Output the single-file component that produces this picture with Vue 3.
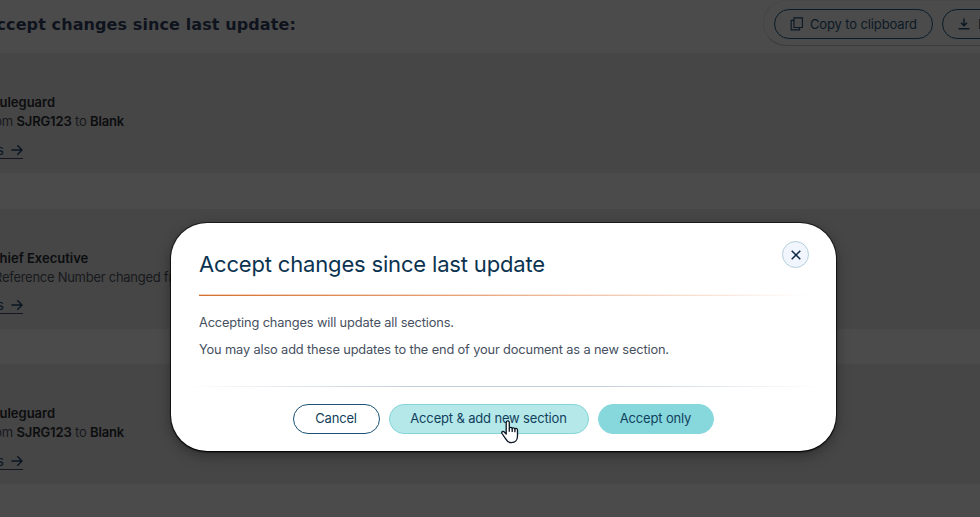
<template>
  <div class="screen">
    <div class="page">
      <header class="page-header">
        <h1>Accept changes since last update:</h1>
        <div class="toolbar">
          <button class="tool-btn">
            <svg class="copy-icon" viewBox="0 0 14 14" fill="none" stroke="currentColor" stroke-width="1.1">
              <path d="M4 .9h8.4v9.6H4zM4 3.4H1.2v9.5h8.4v-2.4"/>
            </svg>
            <span>Copy to clipboard</span>
          </button>
          <button class="tool-btn download">
            <svg class="download-icon" viewBox="0 0 12 12" fill="none" stroke="currentColor" stroke-width="1.5">
              <path d="M6 .5v7M3 4.8l3 3 3-3M.5 10.8h11"/>
            </svg>
            <span>Download</span>
          </button>
        </div>
      </header>

      <section v-for="(item, i) in changes" :key="i" class="change">
        <p class="line" :class="item.kind"><b>{{ item.owner }}</b></p>
        <p v-if="item.kind === 'entity'" class="line detail from">from <b>SJRG123</b> to <b>Blank</b></p>
        <p v-else class="line detail reference">Reference Number changed from</p>
        <a class="link">
          <span>s</span>
          <svg viewBox="0 0 12 12" fill="none" stroke="currentColor" stroke-width="1.5">
            <path d="M.5 6h10.3M6.3 1.3L11 6l-4.7 4.7"/>
          </svg>
        </a>
      </section>
    </div>

    <div class="overlay">
      <div class="modal">
        <div class="modal-header">
          <h2>Accept changes since last update</h2>
          <button class="close-btn">
            <svg viewBox="0 0 10 10" fill="none" stroke="currentColor" stroke-width="1.5">
              <path d="M.7.7l8.6 8.6M9.3.7L.7 9.3"/>
            </svg>
          </button>
        </div>
        <div class="title-rule"></div>
        <div class="modal-body">
          <p>Accepting changes will update all sections.</p>
          <p>You may also add these updates to the end of your document as a new section.</p>
        </div>
        <div class="footer-rule"></div>
        <div class="modal-actions">
          <button class="btn cancel">Cancel</button>
          <button class="btn add">
            Accept &amp; add new section
            <svg class="pointer" viewBox="0 0 18 24" fill="#fff" stroke="#0b1524" stroke-width="1.3" stroke-linejoin="round">
              <path d="M5.2 14V2.6C5.2.4 8.3.4 8.3 2.6v6c0-1.7 2.9-1.6 2.9.3 0-1.6 2.7-1.4 2.7.5 0-1.5 2.6-1.3 2.6.7v6c0 4-2.4 6.6-6 6.6-3 0-4.5-1.3-5.8-3.8L1 13.5c-.9-1.7 1-2.8 2.3-1.5z"/>
              <path d="M8.3 8.6v3.2M11.2 9v3M13.9 9.6v2.7" fill="none"/>
            </svg>
          </button>
          <button class="btn only">Accept only</button>
        </div>
      </div>
    </div>
  </div>
</template>

<script setup>
const changes = [
  { kind: 'entity', owner: 'Ruleguard' },
  { kind: 'role', owner: 'Chief Executive' },
  { kind: 'entity', owner: 'Ruleguard' }
];
</script>

<style>
body {
  margin: 0;
  overflow: hidden;
}
</style>

<style scoped>
.screen {
  display: grid;
  width: 980px;
  height: 517px;
  overflow: hidden;
  background: #4b4b4b;
  font-family: Inter, sans-serif;
}

.page,
.overlay {
  grid-area: 1 / 1;
  min-width: 0;
  min-height: 0;
}

.page {
  overflow: hidden;
}

.page-header {
  display: flex;
  justify-content: space-between;
  height: 53px;
}

h1 {
  margin: 14px 0 0 -16px;
  font: bold 16px/21px "DejaVu Sans", sans-serif;
  letter-spacing: 0.1px;
  color: #0e131d;
  white-space: nowrap;
}

.toolbar {
  box-sizing: border-box;
  display: flex;
  gap: 9px;
  width: 217px;
  height: 46px;
  padding: 8px 0 0 10px;
  border: 1px solid #454545;
  border-top-color: #484848;
  border-bottom-color: #3c3c3e;
  border-right: none;
  border-radius: 23px 0 0 23px;
  overflow: hidden;
}

.tool-btn {
  box-sizing: border-box;
  display: flex;
  flex-shrink: 0;
  align-items: center;
  width: 159px;
  height: 30px;
  padding: 0 15px 1px;
  border: 1px solid #0b1d2a;
  border-radius: 15px;
  background: transparent;
  color: #0b1925;
  font: 400 13px Inter, sans-serif;
  letter-spacing: -0.13px;
  white-space: nowrap;
}

.copy-icon {
  flex-shrink: 0;
  width: 14px;
  height: 14px;
  margin-right: 6px;
}

.download-icon {
  flex-shrink: 0;
  width: 12px;
  height: 12px;
  margin-right: 8px;
}

.change {
  box-sizing: border-box;
  height: 120px;
  margin-bottom: 35.5px;
  padding-top: 40px;
  background: #464646;
  overflow: hidden;
}

.line {
  margin: 0;
  font-size: 13px;
  line-height: 19px;
  color: #17191c;
  white-space: nowrap;
}

.line b {
  font-weight: 600;
  color: #0c0d0f;
}

.entity {
  margin-left: -9px;
}

.role {
  margin-left: -10px;
}

.from {
  margin-left: -15px;
  letter-spacing: -0.16px;
}

.reference {
  margin-left: -6px;
  letter-spacing: -0.27px;
}

.link {
  display: flex;
  align-items: center;
  width: 26px;
  height: 16px;
  margin-top: 10.5px;
  margin-left: -3px;
  border-bottom: 1px solid #14181e;
  color: #0b1622;
  font-size: 13px;
}

.link svg {
  width: 12px;
  height: 12px;
  margin-left: auto;
}

.overlay {
  display: flex;
  justify-content: center;
  align-items: flex-start;
  padding: 223px 0 0 27px;
}

.modal {
  box-sizing: border-box;
  width: 665px;
  height: 228px;
  padding: 18px 27px 0 28px;
  border-radius: 36px;
  background: #fff;
  box-shadow: 0 0 0 1px rgba(0, 0, 0, 0.55), 0 1px 2px #000, 0 4px 14px rgba(0, 0, 0, 0.35);
}

.modal-header {
  display: flex;
  justify-content: space-between;
  height: 53px;
}

h2 {
  margin: 8px 0 0;
  font-size: 22px;
  font-weight: 400;
  line-height: 30px;
  letter-spacing: -0.17px;
  color: #0b3350;
}

.close-btn {
  box-sizing: border-box;
  display: flex;
  align-items: center;
  justify-content: center;
  width: 27px;
  height: 27px;
  padding: 0;
  border: 1px solid #b3cfdb;
  border-radius: 50%;
  background: #f1f5fd;
  color: #0b2a45;
}

.close-btn svg {
  width: 10px;
  height: 10px;
}

.title-rule {
  height: 2px;
  background:
    linear-gradient(rgba(255, 255, 255, 0.65) 50%, transparent 50%),
    linear-gradient(90deg, #d5702f, #e9a57c 45%, #fff);
}

.modal-body {
  padding-top: 13px;
}

.modal-body p {
  margin: 0;
  font-size: 12.8px;
  line-height: 27px;
  letter-spacing: -0.135px;
  color: #465060;
}

.footer-rule {
  height: 1px;
  margin: 23px -12px 0;
  background: linear-gradient(90deg, #fff, #c3cedb 35%, #c3cedb 65%, #fff);
}

.modal-actions {
  display: flex;
  justify-content: center;
  gap: 9px;
  padding: 17px 2px 0 0;
}

.btn {
  box-sizing: border-box;
  height: 30px;
  padding: 0 0 2px;
  border: 1px solid #1b5275;
  border-radius: 15px;
  background: #fff;
  color: #123f5c;
  font: 400 13px Inter, sans-serif;
  letter-spacing: -0.16px;
  white-space: nowrap;
}

.cancel {
  width: 87px;
}

.add {
  position: relative;
  width: 200px;
  border-color: #84d5d7;
  background: #b4e8e9;
}

.only {
  width: 116px;
  border-color: #86d8dc;
  background: #86d8dc;
}

.pointer {
  position: absolute;
  top: 15px;
  left: 111px;
  width: 18px;
  height: 24px;
}
</style>
